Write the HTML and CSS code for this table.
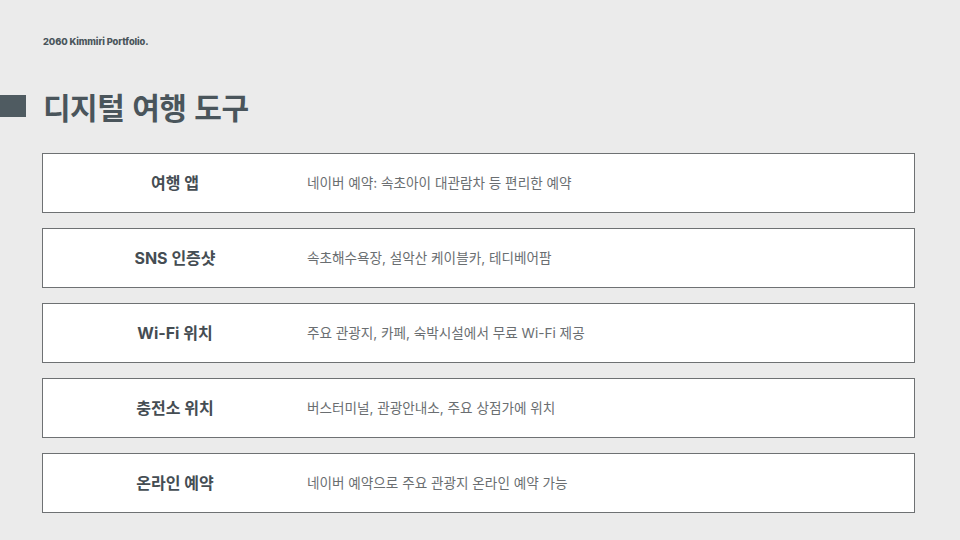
FILE: index.html
```html
<!DOCTYPE html>
<html lang="ko">
<head>
    <meta charset="UTF-8">
    <title>디지털 여행 도구</title>
    <link rel="stylesheet" href="styles.css">
</head>
<body>
    <div class="page">
        <p class="brand">2060 Kimmiri Portfolio.</p>
        <div class="heading">
            <span class="mark"></span>
            <h1>디지털 여행 도구</h1>
        </div>
        <div class="list">
            <div class="row">
                <div class="label">여행 앱</div>
                <div class="desc">네이버 예약: 속초아이 대관람차 등 편리한 예약</div>
            </div>
            <div class="row">
                <div class="label">SNS 인증샷</div>
                <div class="desc">속초해수욕장, 설악산 케이블카, 테디베어팜</div>
            </div>
            <div class="row">
                <div class="label">Wi-Fi 위치</div>
                <div class="desc">주요 관광지, 카페, 숙박시설에서 무료 Wi-Fi 제공</div>
            </div>
            <div class="row">
                <div class="label">충전소 위치</div>
                <div class="desc">버스터미널, 관광안내소, 주요 상점가에 위치</div>
            </div>
            <div class="row">
                <div class="label">온라인 예약</div>
                <div class="desc">네이버 예약으로 주요 관광지 온라인 예약 가능</div>
            </div>
        </div>
    </div>
</body>
</html>
```

FILE: styles.css
```css
html, body {
    height: 100%;
}
body {
    margin: 0;
    background-color: #ebebeb;
    font-family: Inter, "Noto Sans CJK KR", sans-serif;
    color: #4a555b;
}
.page {
    padding: 36px 45px 0 0;
}
.brand {
    margin: 0 0 0 43px;
    font-size: 9.3px;
    font-weight: 800;
    line-height: 12px;
    letter-spacing: -0.1px;
    color: #4a555b;
}
.heading {
    display: flex;
    align-items: center;
    gap: 17px;
    margin-top: 42px;
    height: 32px;
}
.mark {
    width: 26px;
    height: 22px;
    background-color: #4f5b61;
}
h1 {
    margin: 0;
    font-family: "Noto Sans CJK KR", sans-serif;
    font-size: 30px;
    font-weight: 700;
    line-height: 32px;
    letter-spacing: -0.5px;
    color: #4a555b;
}
.list {
    display: flex;
    flex-direction: column;
    gap: 15px;
    margin: 31px 0 0 42px;
}
.row {
    display: grid;
    grid-template-columns: 264px 1fr;
    align-items: center;
    height: 56px;
    padding-bottom: 2px;
    border: 1px solid #6e7173;
    background-color: #ffffff;
}
.label {
    text-align: center;
    font-family: Inter, "Noto Sans CJK KR", sans-serif;
    font-size: 16px;
    font-weight: 700;
    color: #454d53;
}
.desc {
    font-family: Inter, "Noto Sans CJK KR", sans-serif;
    font-size: 13.6px;
    color: #6a6e71;
}
```
